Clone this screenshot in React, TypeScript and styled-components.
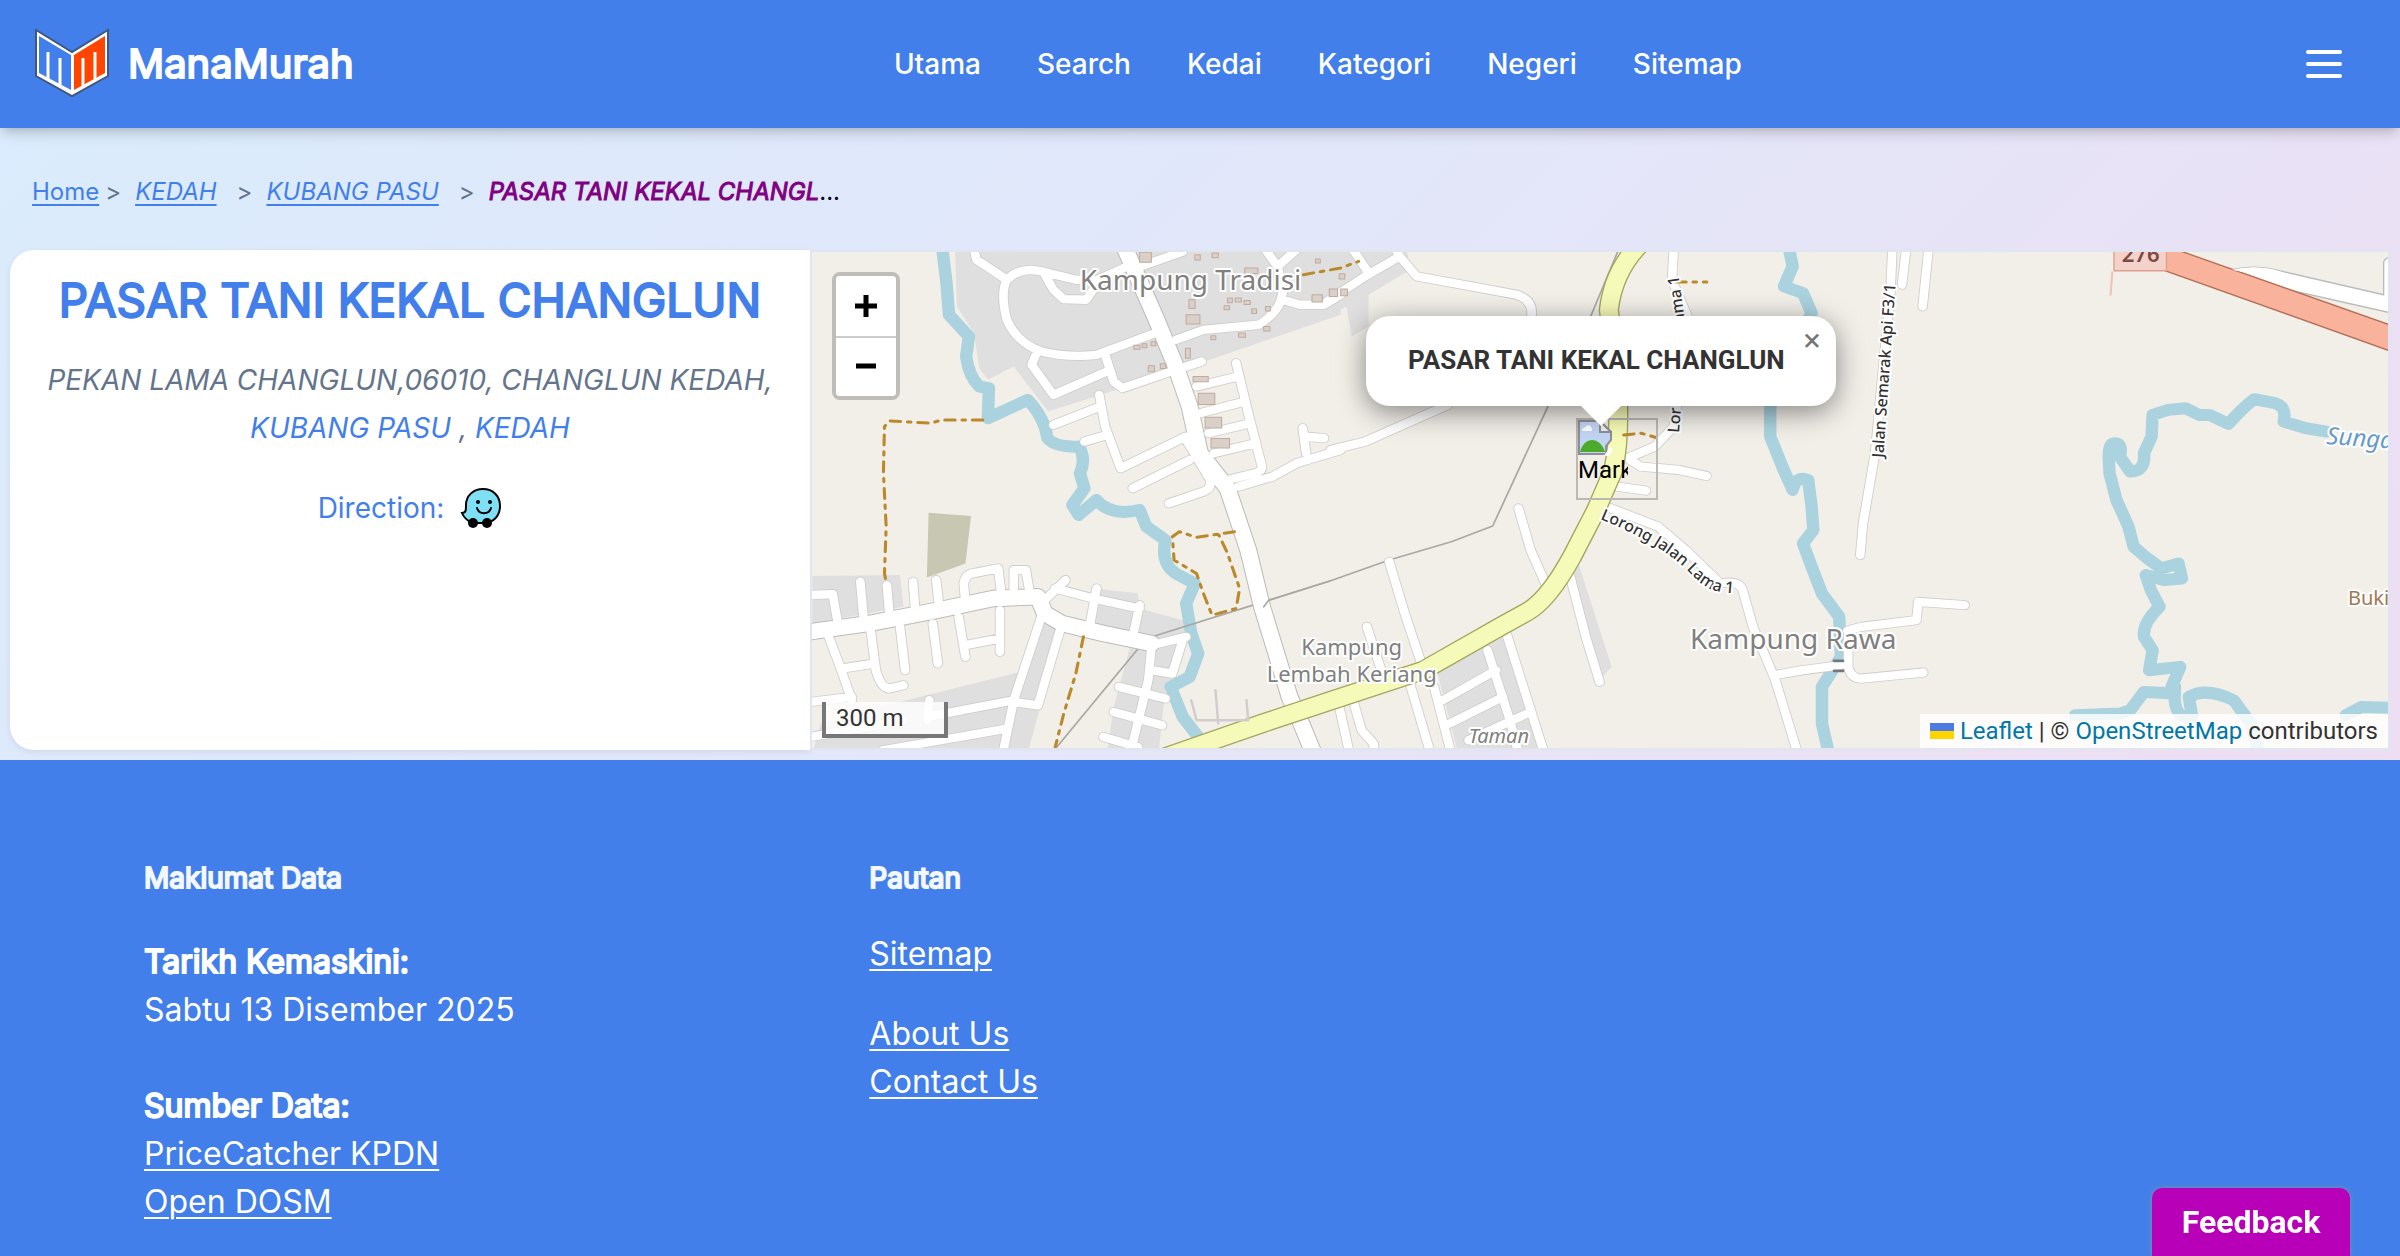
import React from "react";
import styled, { createGlobalStyle } from "styled-components";

const BLUE = "#427feb";
const INTER = `Inter, "Noto Sans", sans-serif`;
const ROBOTO = `Roboto, "Liberation Sans", sans-serif`;

const GlobalStyle = createGlobalStyle`
  *, *::before, *::after { box-sizing: border-box; }
  body { margin: 0; font-family: ${INTER}; font-size: 32px; line-height: 48px; font-optical-sizing: none; color: #000; }
  h1, h2, p, ul, ol { margin: 0; padding: 0; }
  ul, ol { list-style: none; }
  a { color: inherit; }
  button { font: inherit; border: 0; padding: 0; cursor: pointer; }
`;

const Page = styled.div`
  min-height: 100vh;
  display: flex;
  flex-direction: column;
  background: linear-gradient(135deg, #d9ecfd 0%, #e3e6f9 46%, #ecdff3 80%, #efdcf1 100%);
`;

const Header = styled.header`
  display: flex;
  align-items: center;
  justify-content: space-between;
  height: 128px;
  padding: 0 34px 0 32px;
  background: ${BLUE};
  color: #fff;
  box-shadow: 0 8px 12px -2px rgba(0, 0, 0, 0.14), 0 4px 8px -4px rgba(0, 0, 0, 0.14);
`;

const Brand = styled.a`
  display: flex;
  align-items: center;
  gap: 16px;
  color: #fff;
  text-decoration: none;
  font-size: 40px;
  -webkit-text-stroke: 2px currentColor;
  svg { -webkit-text-stroke: 0; }
`;

const NavList = styled.ul`
  display: flex;
  gap: 56px;
  font-size: 28px;
  font-weight: 500;
`;

const NavLink = styled.a`
  color: #fff;
  text-decoration: none;
`;

const MenuButton = styled.button`
  display: flex;
  flex-direction: column;
  gap: 8px;
  padding: 24px;
  background: none;
`;

const MenuBar = styled.span`
  width: 36px;
  height: 4px;
  border-radius: 2px;
  background: #fff;
`;

const Crumbs = styled.ol`
  display: flex;
  align-items: center;
  height: 122px;
  padding: 6px 32px 0;
  font-size: 24px;
  color: #64748b;
`;

const Crumb = styled.li<{ $gap?: number }>`
  display: flex;
  gap: ${(p) => p.$gap ?? 20}px;
  margin-right: 14px;
`;

const CrumbLink = styled.a<{ $italic?: boolean }>`
  color: ${BLUE};
  font-style: ${(p) => (p.$italic ? "italic" : "normal")};
  text-underline-offset: 4px;
`;

const CrumbCurrent = styled.li`
  white-space: nowrap;
  color: #000;
  b {
    color: #800080;
    font-style: italic;
    font-weight: 400;
    -webkit-text-stroke: 1px currentColor;
  }
`;

const Store = styled.main`
  display: flex;
  padding: 0 10px 10px;
`;

const Info = styled.section`
  flex: 0 0 800px;
  min-width: 0;
  min-height: 500px;
  padding: 14px 20px;
  border-radius: 24px 0 0 24px;
  background: #fff;
  text-align: center;
  box-shadow: 0 2px 6px rgba(0, 0, 0, 0.07);
`;

const Title = styled.h1`
  font-size: 46px;
  line-height: 72px;
  font-weight: 400;
  -webkit-text-stroke: 2px currentColor;
  white-space: nowrap;
  color: ${BLUE};
`;

const Address = styled.p`
  margin-top: 20px;
  font-size: 28px;
  font-style: italic;
  color: #64748b;
  white-space: nowrap;
  a { color: ${BLUE}; text-decoration: none; }
`;

const Direction = styled.p`
  display: flex;
  align-items: center;
  justify-content: center;
  gap: 16px;
  margin-top: 32px;
  font-size: 28px;
  color: ${BLUE};
`;

const IconLink = styled.a`
  display: flex;
`;

const MapFrame = styled.section`
  position: relative;
  flex: 1;
  min-width: 0;
  overflow: hidden;
  border: 2px solid #e0e6ef;
  background: #f2efe9;
  font-family: ${ROBOTO};
  font-size: 24px;
  line-height: 34px;
`;

const MapDrawing = styled.svg`
  position: absolute;
  inset: 0;
  width: 100%;
  height: 100%;
`;

const ZoomControl = styled.div`
  position: absolute;
  top: 20px;
  left: 20px;
  border: 4px solid #bfbdb8;
  border-radius: 8px;
  background: #fff;
`;

const ZoomButton = styled.button`
  display: flex;
  align-items: center;
  justify-content: center;
  width: 60px;
  height: 60px;
  background: #fff;
  border-radius: 4px;
  & + & { border-top: 2px solid #ccc; border-radius: 0 0 4px 4px; }
`;

const Scale = styled.div`
  position: absolute;
  left: 10px;
  bottom: 10px;
  width: 126px;
  height: 36px;
  padding-left: 10px;
  border: 4px solid #777;
  border-top: 0;
  background: rgba(255, 255, 255, 0.8);
  color: #333;
  line-height: 32px;
`;

const Attribution = styled.div`
  position: absolute;
  right: 0;
  bottom: 0;
  display: flex;
  align-items: center;
  gap: 6px;
  padding: 0 10px;
  background: rgba(255, 255, 255, 0.82);
  color: #333;
  a { color: #0078a8; text-decoration: none; }
`;

const Flag = styled.span`
  width: 24px;
  height: 16px;
  background: linear-gradient(#4c7be1 50%, #ffd500 50%);
`;

const Marker = styled.div`
  position: absolute;
  left: calc(50% - 24px);
  top: 166px;
  width: 82px;
  height: 82px;
  border: 2px solid #b9b8b4;
  color: #000;
`;

const MarkerAlt = styled.span`
  display: block;
  width: 50px;
  overflow: hidden;
  line-height: 28px;
`;

const MarkerIcon = styled.svg`
  display: block;
  width: 34px;
  height: 36px;
`;

const Popup = styled.div`
  position: absolute;
  left: calc(50% + 1px);
  top: 64px;
  width: 470px;
  height: 90px;
  transform: translateX(-50%);
  display: flex;
  align-items: center;
  padding: 0 42px 2px;
  border-radius: 24px;
  background: #fff;
  color: #333;
  font-size: 26px;
  font-weight: 700;
  white-space: nowrap;
  box-shadow: 0 6px 28px rgba(0, 0, 0, 0.45);
  &::after {
    content: "";
    position: absolute;
    top: 100%;
    left: 50%;
    margin-left: -20px;
    border: 20px solid transparent;
    border-top-color: #fff;
    border-bottom: 0;
  }
`;

const CloseButton = styled.button`
  position: absolute;
  top: 0;
  right: 0;
  width: 48px;
  height: 48px;
  background: none;
  color: #757575;
  font-size: 32px;
  font-weight: 400;
`;

const Footer = styled.footer`
  flex: 1;
  display: grid;
  grid-template-columns: repeat(3, 1fr);
  gap: 64px;
  padding: 94px 144px 24px;
  background: ${BLUE};
  color: #fff;
`;

const FooterTitle = styled.h2`
  font-size: 28px;
  line-height: 48px;
  font-weight: 400;
  -webkit-text-stroke: 2px currentColor;
  color: #f3f7fe;
`;

const FooterText = styled.div<{ $top: number }>`
  margin-top: ${(p) => p.$top}px;
  b { font-weight: 400; -webkit-text-stroke: 2px currentColor; }
  a { text-underline-offset: 4px; text-decoration-thickness: 2px; }
`;

const Feedback = styled.button`
  position: fixed;
  right: 50px;
  bottom: 0;
  width: 198px;
  height: 68px;
  border-radius: 10px 10px 0 0;
  background: #b800b8;
  color: #fff;
  font-family: ${ROBOTO};
  font-size: 32px;
  font-weight: 700;
  box-shadow: 0 0 5px #8a8f9c;
`;

const Logo = () => (
  <svg width="80" height="76" viewBox="0 0 80 76" aria-hidden="true">
    <path d="M4 4 40 26 76 4V50L40 70 4 50Z" fill="#fff" stroke="#40587f" strokeWidth="2" />
    <path d="M7 10 39 29V64L7 47Z" fill={BLUE} />
    <path d="M42 29 73 10V47L42 64Z" fill="#ff4500" />
    <path d="M16 54V26M28 61V32M51 61V32M63 54V26" fill="none" stroke="#fff" strokeWidth="3" />
  </svg>
);

const Waze = () => (
  <svg width="42" height="42" viewBox="0 0 42 42" aria-label="Waze">
    <path
      d="M23 2C13 2 6 9 6 18c0 5 0 8-4 8 2 5 6 8 10 10h12c9 0 16-7 16-17S33 2 23 2Z"
      fill="#7fe0f5"
      stroke="#000"
      strokeWidth="2"
    />
    <circle cx="13" cy="36" r="5" />
    <circle cx="27" cy="36" r="5" />
    <circle cx="18" cy="15" r="2" />
    <circle cx="30" cy="15" r="2" />
    <path d="M17 21c2 7 12 7 14 0" fill="none" stroke="#000" strokeWidth="2" strokeLinecap="round" />
  </svg>
);

// Streets of the western, middle and eastern map tiles, in tile units.
const STREETS = [
  {
    dx: 0,
    d: `M505 30 512 60 600 120M960 75 860 122 800 120 700 95Q640 80 600 120 580 160 600 240 630 310 700 335 780 355 860 345L1030 280
    M710 105 735 150 765 178 830 180 850 150M690 330 672 375 735 465 890 395M885 345 910 425 935 445 1090 390 1165 365
    M960 90 1110 36M1090 300 1170 270 1330 255Q1400 210 1400 150L1385 80 1350 30M1385 80 1440 30M1400 180 1450 195 1520 195 1568 165
    M868 465 885 560 930 685 1120 590M735 555 870 500M825 605 890 585M965 745 1130 660M1120 600 1190 720Q1195 745 1170 755L1070 790
    M1150 440 1270 410M1265 370 1300 520 1340 680Q1340 695 1320 700L1240 720M1160 520 1290 485M1185 580 1305 550M1200 640 1320 610
    M1270 740 1370 710 1440 670 1568 630M1458 565 1468 640M1468 590 1520 595
    M30 1065 95 1062 110 1150M175 1025 185 1140M252 1035 260 1130M328 1025 335 1120M395 1020 405 1110M480 1090 475 1030Q480 1000 510 998L575 985 585 1070
    M620 1060 620 990 655 990 665 1050M700 1090 770 1020M740 1045 850 1075 985 1105M860 1045 840 1160M985 1095 965 1190
    M80 1180 120 1290 150 1380M205 1170 220 1290Q235 1345 260 1345L300 1335M120 1285 215 1270M290 1160 305 1290M385 1150 400 1270M460 1130 480 1250
    M580 1110 580 1235M480 1215 580 1195M700 1130 620 1380 590 1530M760 1150 690 1395 620 1385M30 1385 150 1370M370 1430 620 1380
    M375 1380 370 1440M30 1490 300 1440M240 1530 600 1465M1120 1190 1020 1215 1010 1320 960 1530M1110 1200 1080 1300 1020 1290
    M925 1340 1060 1375M910 1415 1050 1455M880 1490 980 1520`,
  },
  {
    dx: 1539,
    d: `M-10 185 100 110 200 50 250 110 540 165Q595 185 580 240M65 30 110 100M200 50 190 30M0 630 100 605 340 495
    M105 1160 150 1300M170 965 215 1120 270 1290M230 1330 290 1540M545 805 580 930 625 1035M695 1010 740 1190 780 1325
    M300 1340 350 1540M455 1230 520 1440 545 1540M510 1180 620 1540M325 1380 480 1290M345 1450 500 1370M400 1500 580 1415
    M25 1400 55 1540M65 1380 90 1470 125 1510 125 1540M995 30 990 120 1010 170 1035 230 1020 400 995 560 940 620 860 655 900 680 1010 690 1090 708
    M830 740 915 752M800 800 950 860 1030 930 1130 1030Q1185 1020 1195 1050L1225 1160 1290 1320 1355 1540M1285 1305 1370 1290 1480 1275`,
  },
  {
    dx: 3078,
    d: `M-40 1172 0 1160 160 1140 165 1085 300 1095M-38 1190 -38 1280Q-30 1315 0 1315L180 1297M-3 945 5 850 40 640 85 150 90 30M130 30 118 135M195 30 178 200`,
  },
];

const MAIN_ROADS = `M940 20 970 90 1030 230 1090 380 1130 500 1160 640 1240 745 1300 930 1340 1100 1420 1370 1450 1440 1490 1540
  M30 1175 200 1150 400 1110 560 1075 690 1070M690 1070 710 1120 760 1150 880 1180 1020 1210`;

const YELLOW_ROAD =
  "M2440 10Q2360 90 2346 210L2368 400Q2382 580 2359 690L2309 810 2239 950Q2170 1080 2109 1115L2039 1155 1809 1290 1529 1385 1339 1450 1060 1550";

const RIVERS = [
  {
    dx: 0,
    d: `M412 20 425 130 432 225 490 290 482 350Q490 410 520 440L548 445 545 535 660 480Q690 510 710 560L718 595Q740 622 810 620 830 660 812 700
    L825 745 790 795 808 825 860 780Q900 830 985 810L1005 860 1060 900Q1045 970 1090 1000L1145 1030 1120 1090 1135 1180 1155 1240 1130 1310 1075 1340 1110 1430 1155 1490 1170 1540`,
  },
  {
    dx: 1539,
    d: `M1330 30 1340 80 1315 140 1370 160 1395 220 1330 350 1275 500 1275 590 1310 680 1340 750Q1350 705 1385 720L1395 800 1400 870 1370 910 1395 980 1425 1060 1475 1130 1480 1250 1425 1340 1425 1450 1445 1540`,
  },
  {
    dx: 3078,
    d: `M1350 575 1290 565 1225 545Q1235 500 1200 490L1140 478Q1110 500 1065 552L1010 525 980 525 940 505 890 510 845 525 842 590 820 640Q825 695 780 695L750 650
    Q760 610 735 610 715 610 718 660L720 700 740 780 775 860 790 920 830 955 870 985 920 970 930 1015 880 1020 825 1005 840 1050 865 1100Q815 1150 820 1190L845 1230 835 1290
    925 1280 900 1340 910 1360 820 1355 780 1410 750 1420 620 1425M910 1340Q900 1440 960 1430 L950 1370Q1000 1340 1080 1380L1130 1450 1160 1560M1405 1425 1450 1400 1600 1405`,
  },
];

const BUILT_UP = `M450 30H1568V225L1160 370 720 515 620 380 545 420 520 385 505 280 455 200ZM36 1008 290 1005 300 1100 36 1150Z
  M860 1045 980 1060 985 1105 1110 1140 1130 1180 1000 1200 850 1160ZM230 1400 640 1295 700 1130 760 1160 660 1540H36L60 1450Z
  M960 1210 1130 1190 1090 1310 1060 1340 1040 1540H890L910 1400ZM1568 30H1760L1770 90 1649 165V260L1600 290 1585 200 1568 210Z
  M2254 960 2354 1280 2319 1320 2229 1010ZM1849 1300 2049 1185 2159 1540H1909Z`;

const PATHS = `M530 540 410 540 380 550 260 543 245 560 242 700 250 860 245 1000 250 1025
  M1260 875 1150 892 1100 875 1080 890 1085 960 1150 1000 1170 1060 1195 1125 1265 1105 1275 1045 1240 940 1215 885
  M822 1190 800 1300 765 1420 738 1530M1460 105 1568 85 1620 65M2540 127H2630M2389 585 2440 580 2480 592`;

const BUILDINGS = [
  [985, 38, 34, 30], [1145, 45, 16, 16], [1195, 40, 18, 14], [1290, 85, 38, 16], [1240, 175, 14, 14], [1262, 175, 18, 12],
  [1288, 182, 18, 12], [1230, 198, 16, 12], [1310, 207, 14, 14], [1350, 200, 14, 14], [1485, 165, 30, 22], [1535, 148, 24, 22],
  [1128, 180, 18, 26], [1120, 225, 40, 28], [968, 316, 18, 12], [992, 312, 14, 12], [1018, 306, 14, 12], [1010, 378, 18, 18],
  [1045, 372, 16, 14], [1118, 325, 14, 30], [1272, 280, 20, 12], [1192, 288, 14, 12], [1345, 260, 18, 14], [1140, 410, 44, 16],
  [1155, 460, 48, 34], [1175, 532, 48, 32], [1192, 596, 54, 28], [1568, 148, 20, 20], [1564, 102, 16, 16], [1495, 58, 14, 12],
];

const MapTiles = () => (
  <MapDrawing viewBox="812 252 1574 496" preserveAspectRatio="xMidYMid slice" aria-label="Peta">
    <defs>
      <path id="lorong" d="M1599 519C1640 536 1668 552 1688 572S1712 592 1745 594" />
    </defs>
    <g transform="translate(800 240) scale(0.34436 0.33333)" fill="none" strokeLinejoin="round" strokeLinecap="round">
      <path d={BUILT_UP} fill="#dfdfdf" />
      <path d="M373 818 496 828 480 970 368 1012Z" fill="#c8c7b2" />
      {RIVERS.map((r) => (
        <path key={r.dx} transform={`translate(${r.dx})`} d={r.d} stroke="#aad3df" strokeWidth="36" />
      ))}
      <path d="M745 1520 1005 1195 1360 1080 1539 1022 1709 960 1889 905 2009 858 2169 500M2294 228 2374 30" stroke="#aaa8a4" strokeWidth="5" />
      {STREETS.map((s) => (
        <path key={s.dx} transform={`translate(${s.dx})`} d={s.d} stroke="#cfcdcb" strokeWidth="30" />
      ))}
      <path d={MAIN_ROADS} stroke="#bdbbb8" strokeWidth="52" />
      {STREETS.map((s) => (
        <path key={s.dx} transform={`translate(${s.dx})`} d={s.d} stroke="#fff" strokeWidth="25" />
      ))}
      <path d={MAIN_ROADS} stroke="#fff" strokeWidth="46" />
      <path d={YELLOW_ROAD} stroke="#a6a660" strokeWidth="59" />
      <path d={YELLOW_ROAD} stroke="#f6fab8" strokeWidth="51" />
      {BUILDINGS.map(([x, y, w, h]) => (
        <rect key={`${x}-${y}`} x={x} y={y} width={w} height={h} fill="#d9d0c9" stroke="#c2aa9d" strokeWidth="3" />
      ))}
      <path d="M1135 1380 1150 1440 1300 1440 1295 1380M1205 1350 1213 1450" stroke="#d2cccc" strokeWidth="7" />
      <path d="M1345 1100 1360 1080 1539 1022" stroke="#aaa8a4" strokeWidth="5" />
      <path d={PATHS} stroke="#b9892c" strokeWidth="9" strokeDasharray="30 20 10 20" />
      <path d="M2999 1262h26M2999 1292h26" stroke="#777" strokeWidth="8" />
      <g transform="translate(3078)">
        <path d="M1075 90Q1140 75 1200 90L1515 165V70Q1515 50 1560 50V225L1230 148Z" fill="#fff" stroke="#bbb" strokeWidth="4" />
        <path d="M860 10 1600 280V358L860 85Z" fill="#f9b29c" stroke="#b56d52" strokeWidth="4" />
        <path d="M1075 90Q1140 75 1200 90L1400 160Z" fill="#fff" />
        <path d="M733 20H885V93H733Z" fill="#f5d2c9" stroke="#dda191" strokeWidth="4" />
        <path d="M728 98 723 165" stroke="#efc2b8" strokeWidth="6" />
      </g>
    </g>
    <g fontFamily='"Noto Sans", sans-serif' fill="#808080" stroke="#fff" strokeWidth="4" strokeLinejoin="round" paintOrder="stroke">
      <text x="1190" y="290" fontSize="28" textAnchor="middle">Kampung Tradisi</text>
      <text x="1351" y="655" fontSize="22" textAnchor="middle">Kampung</text>
      <text x="1351" y="682" fontSize="22" textAnchor="middle">Lembah Keriang</text>
      <text x="1792" y="649" fontSize="28" textAnchor="middle">Kampung Rawa</text>
      <text x="1498" y="743" fontSize="20" textAnchor="middle" fontStyle="italic">Taman</text>
      <text x="2324" y="444" fontSize="24" fontStyle="italic" fill="#6699cc" transform="rotate(4 2324 444)">Sunga</text>
      <text x="2346" y="605" fontSize="20" fill="#a17850">Buki</text>
      <text x="2139" y="262" fontSize="22" fontWeight="600" fill="#7c4a45" stroke="none" textAnchor="middle">276</text>
      <g fill="#333" fontSize="16" fontWeight="500">
        <text><textPath href="#lorong">Lorong Jalan Lama 1</textPath></text>
        <text x="1678" y="433" transform="rotate(-86 1678 433)">Lor</text>
        <text x="1684" y="322" transform="rotate(-98 1684 322)">ama 1</text>
        <text x="1882" y="458" transform="rotate(-86 1882 458)">Jalan Semarak Api F3/1</text>
      </g>
    </g>
  </MapDrawing>
);

const NAV = ["Utama", "Search", "Kedai", "Kategori", "Negeri", "Sitemap"];

export default function App() {
  return (
    <Page>
      <GlobalStyle />
      <Header>
        <Brand href="#">
          <Logo />
          ManaMurah
        </Brand>
        <nav>
          <NavList>
            {NAV.map((label) => (
              <li key={label}><NavLink href="#">{label}</NavLink></li>
            ))}
          </NavList>
        </nav>
        <MenuButton aria-label="Menu">
          <MenuBar />
          <MenuBar />
          <MenuBar />
        </MenuButton>
      </Header>

      <Crumbs>
        <Crumb $gap={6}><CrumbLink href="#">Home</CrumbLink>&gt;</Crumb>
        <Crumb><CrumbLink href="#" $italic>KEDAH</CrumbLink>&gt;</Crumb>
        <Crumb><CrumbLink href="#" $italic>KUBANG PASU</CrumbLink>&gt;</Crumb>
        <CrumbCurrent><b>PASAR TANI KEKAL CHANGL</b>...</CrumbCurrent>
      </Crumbs>

      <Store>
        <Info>
          <Title>PASAR TANI KEKAL CHANGLUN</Title>
          <Address>
            PEKAN LAMA CHANGLUN,06010, CHANGLUN KEDAH,
            <br />
            <a href="#">KUBANG PASU</a> , <a href="#">KEDAH</a>
          </Address>
          <Direction>
            Direction:
            <IconLink href="#"><Waze /></IconLink>
          </Direction>
        </Info>
        <MapFrame>
          <MapTiles />
          <Marker>
            <MarkerIcon viewBox="0 0 34 36" aria-hidden="true">
              <path d="M1 1H22L33 12V20L28 26V34H1Z" fill="#c3d5f5" stroke="#8d8f94" strokeWidth="2" />
              <path d="M4 11c0-4 4-3 4-5 4-2 6 1 6 5Z" fill="#fff" />
              <path d="M2 32c4-16 20-16 25 0Z" fill="#4dab2c" />
              <path d="M22 1V12H33Z" fill="#eee" stroke="#8d8f94" strokeWidth="2" />
              <path d="M28 36 36 26" stroke="#fff" strokeWidth="4" />
            </MarkerIcon>
            <MarkerAlt>Mark</MarkerAlt>
          </Marker>
          <Popup>
            PASAR TANI KEKAL CHANGLUN
            <CloseButton aria-label="Close popup">×</CloseButton>
          </Popup>
          <ZoomControl>
            <ZoomButton aria-label="Zoom in">
              <svg width="22" height="24" viewBox="0 0 22 24"><path d="M11 1V23M0 12H22" stroke="#000" strokeWidth="5" /></svg>
            </ZoomButton>
            <ZoomButton aria-label="Zoom out">
              <svg width="20" height="24" viewBox="0 0 20 24"><path d="M0 11H20" stroke="#000" strokeWidth="5" /></svg>
            </ZoomButton>
          </ZoomControl>
          <Scale>300 m</Scale>
          <Attribution>
            <Flag />
            <span>
              <a href="#">Leaflet</a> | © <a href="#">OpenStreetMap</a> contributors
            </span>
          </Attribution>
        </MapFrame>
      </Store>

      <Footer>
        <section>
          <FooterTitle>Maklumat Data</FooterTitle>
          <FooterText $top={36}>
            <b>Tarikh Kemaskini:</b>
            <br />
            Sabtu 13 Disember 2025
          </FooterText>
          <FooterText $top={48}>
            <b>Sumber Data:</b>
            <br />
            <a href="#">PriceCatcher KPDN</a>
            <br />
            <a href="#">Open DOSM</a>
          </FooterText>
        </section>
        <section>
          <FooterTitle>Pautan</FooterTitle>
          <FooterText $top={28}><a href="#">Sitemap</a></FooterText>
          <FooterText $top={32}>
            <a href="#">About Us</a>
            <br />
            <a href="#">Contact Us</a>
          </FooterText>
        </section>
      </Footer>
      <Feedback>Feedback</Feedback>
    </Page>
  );
}
